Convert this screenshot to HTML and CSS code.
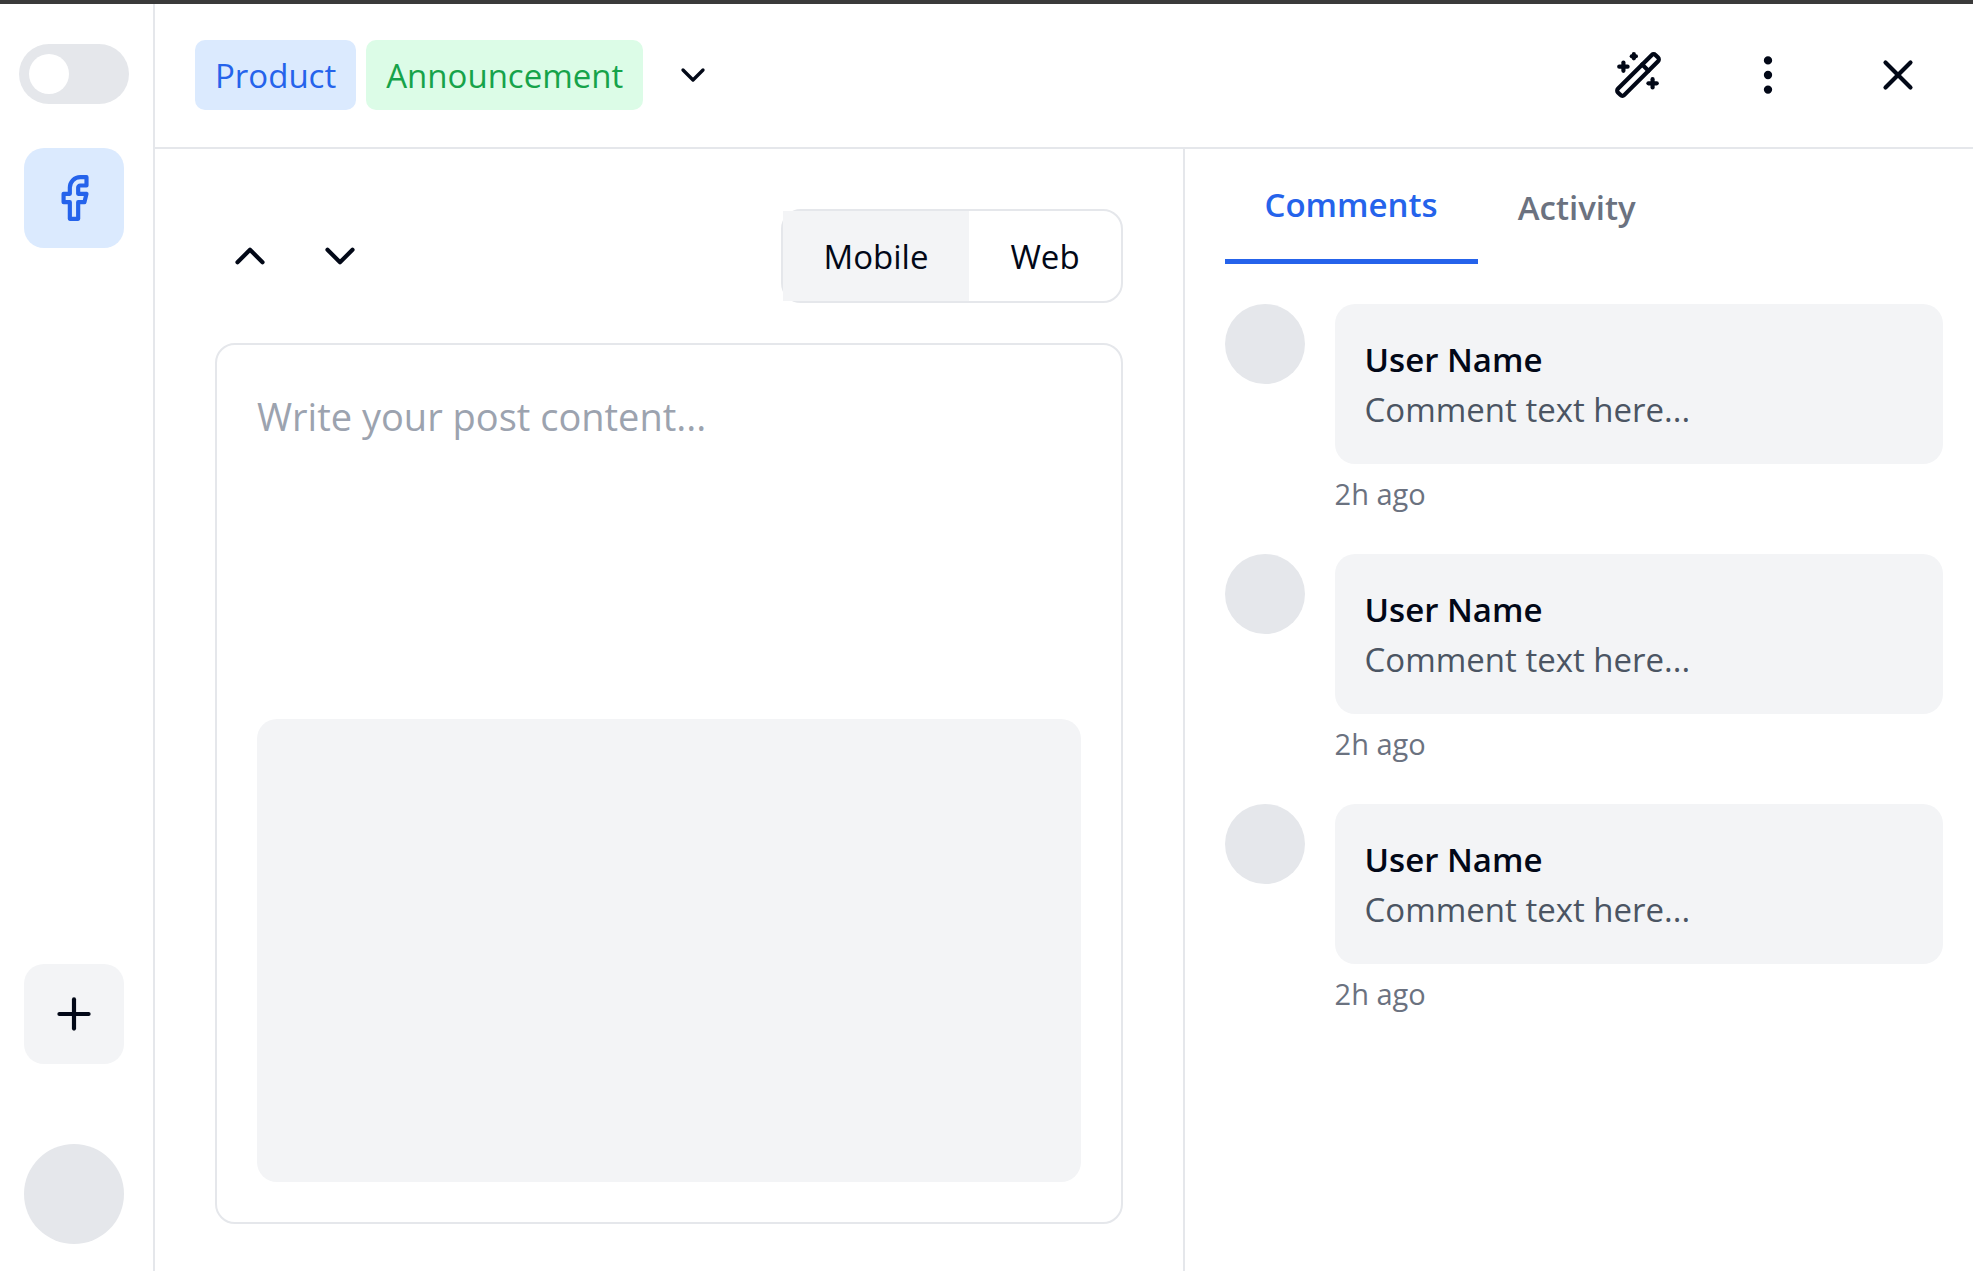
FILE: index.html
```html
<!DOCTYPE html>
<html lang="en">
<head>
  <meta charset="utf-8">
  <meta name="viewport" content="width=device-width, initial-scale=1">
  <title>Post editor</title>
  <link rel="stylesheet" href="styles.css">
</head>
<body>
  <div class="app">
    <aside class="sidebar">
      <input class="switch" type="checkbox" role="switch" aria-label="Enable channel">
      <button class="tile tile-active" type="button" aria-label="Facebook">
        <svg class="icon" viewBox="0 0 24 24"><path d="M18 2h-3a5 5 0 0 0-5 5v3H7v4h3v8h4v-8h3l1-4h-4V7a1 1 0 0 1 1-1h3z"/></svg>
      </button>
      <div class="sidebar-end">
        <button class="tile" type="button" aria-label="Add channel">
          <svg class="icon" viewBox="0 0 24 24"><path d="M5 12h14"/><path d="M12 5v14"/></svg>
        </button>
        <div class="profile"></div>
      </div>
    </aside>

    <div class="workspace">
      <header class="topbar">
        <div class="tags">
          <span class="tag tag-blue">Product</span>
          <span class="tag tag-green">Announcement</span>
          <button class="icon-button tags-more" type="button" aria-label="More tags">
            <svg class="icon icon-small" viewBox="0 0 24 24"><path d="m6 9 6 6 6-6"/></svg>
          </button>
        </div>
        <div class="actions">
          <button class="icon-button action" type="button" aria-label="Assist">
            <svg class="icon" viewBox="0 0 24 24"><path d="m21.64 3.64-1.28-1.28a1.21 1.21 0 0 0-1.72 0L2.36 18.64a1.21 1.21 0 0 0 0 1.72l1.28 1.28a1.2 1.2 0 0 0 1.72 0L21.64 5.36a1.2 1.2 0 0 0 0-1.72"/><path d="m14 7 3 3"/><path d="M5 6v4"/><path d="M19 14v4"/><path d="M10 2v2"/><path d="M7 8H3"/><path d="M21 16h-4"/><path d="M11 3H9"/></svg>
          </button>
          <button class="icon-button action" type="button" aria-label="More options">
            <svg class="icon" viewBox="0 0 24 24"><circle cx="12" cy="12" r="1"/><circle cx="12" cy="5" r="1"/><circle cx="12" cy="19" r="1"/></svg>
          </button>
          <button class="icon-button action" type="button" aria-label="Close">
            <svg class="icon" viewBox="0 0 24 24"><path d="M18 6 6 18"/><path d="m6 6 12 12"/></svg>
          </button>
        </div>
      </header>

      <div class="columns">
        <main class="editor">
          <div class="toolbar">
            <div class="stepper">
              <button class="icon-button" type="button" aria-label="Previous post">
                <svg class="icon" viewBox="0 0 24 24"><path d="m18 15-6-6-6 6"/></svg>
              </button>
              <button class="icon-button" type="button" aria-label="Next post">
                <svg class="icon" viewBox="0 0 24 24"><path d="m6 9 6 6 6-6"/></svg>
              </button>
            </div>
            <div class="segmented">
              <button class="segment segment-active" type="button" aria-pressed="true">Mobile</button>
              <button class="segment" type="button" aria-pressed="false">Web</button>
            </div>
          </div>
          <section class="post">
            <textarea class="post-text" aria-label="Post content" placeholder="Write your post content..."></textarea>
            <div class="post-media"></div>
          </section>
        </main>

        <section class="panel">
          <div class="tabs" role="tablist">
            <button class="tab tab-active" type="button" role="tab" aria-selected="true">Comments</button>
            <button class="tab" type="button" role="tab" aria-selected="false">Activity</button>
          </div>
          <ul class="comments">
            <li class="comment">
              <div class="avatar"></div>
              <div class="comment-body">
                <div class="bubble">
                  <p class="author">User Name</p>
                  <p class="message">Comment text here...</p>
                </div>
                <p class="time">2h ago</p>
              </div>
            </li>
            <li class="comment">
              <div class="avatar"></div>
              <div class="comment-body">
                <div class="bubble">
                  <p class="author">User Name</p>
                  <p class="message">Comment text here...</p>
                </div>
                <p class="time">2h ago</p>
              </div>
            </li>
            <li class="comment">
              <div class="avatar"></div>
              <div class="comment-body">
                <div class="bubble">
                  <p class="author">User Name</p>
                  <p class="message">Comment text here...</p>
                </div>
                <p class="time">2h ago</p>
              </div>
            </li>
          </ul>
        </section>
      </div>
    </div>
  </div>
</body>
</html>
```
FILE: styles.css
```css
:root {
  --ink: #020817;
  --line: #e5e7eb;
  --fill: #f3f4f6;
  --blue: #2563eb;
  --blue-soft: #dbeafe;
}

*,
*::before {
  box-sizing: border-box;
}

body {
  margin: 0;
  background: #fff;
  color: var(--ink);
  font-family: "Segoe UI", "Open Sans", "Noto Sans", sans-serif;
  font-size: 33px;
  line-height: 50px;
}

button,
textarea {
  margin: 0;
  padding: 0;
  border: 0;
  background: none;
  color: inherit;
  font: inherit;
}

button {
  cursor: pointer;
}

p,
ul {
  margin: 0;
  padding: 0;
  list-style: none;
}

.app {
  display: flex;
  min-height: 100vh;
  border-top: 4px solid #3a3a3a;
}

.icon {
  display: block;
  width: 50px;
  height: 50px;
  fill: none;
  stroke: currentColor;
  stroke-width: 2;
  stroke-linecap: round;
  stroke-linejoin: round;
}

.icon-small {
  width: 40px;
  height: 40px;
}

.icon-button {
  padding: 10px;
}

/* Sidebar */

.sidebar {
  display: flex;
  flex: none;
  flex-direction: column;
  align-items: center;
  gap: 44px;
  width: 155px;
  padding: 40px 5px 27px 0;
  border-right: 2px solid var(--line);
}

.switch {
  width: 110px;
  height: 60px;
  margin: 0;
  padding: 10px;
  border-radius: 30px;
  background: var(--line);
  appearance: none;
}

.switch::before {
  content: "";
  display: block;
  width: 40px;
  height: 40px;
  border-radius: 50%;
  background: #fff;
}

.switch:checked::before {
  margin-left: auto;
}

.tile {
  display: grid;
  place-items: center;
  width: 100px;
  height: 100px;
  border-radius: 20px;
  background: var(--fill);
}

.tile-active {
  background: var(--blue-soft);
  color: var(--blue);
}

.sidebar-end {
  display: flex;
  flex-direction: column;
  gap: 80px;
  margin-top: auto;
}

.profile {
  width: 100px;
  height: 100px;
  border-radius: 50%;
  background: var(--line);
}

/* Top bar */

.workspace {
  display: flex;
  flex: 1;
  flex-direction: column;
  min-width: 0;
}

.topbar {
  display: flex;
  align-items: center;
  justify-content: space-between;
  padding: 26px 30px 27px 40px;
  border-bottom: 2px solid var(--line);
}

.tags {
  display: flex;
  align-items: center;
  gap: 10px;
}

.tag {
  padding: 11px 20px 9px;
  border-radius: 10px;
}

.tag-blue {
  background: var(--blue-soft);
  color: var(--blue);
}

.tag-green {
  background: #dcfce7;
  color: #16a34a;
}

.tags-more {
  margin-left: 10px;
}

.actions {
  display: flex;
  gap: 40px;
}

.action {
  padding: 20px;
}

/* Editor */

.columns {
  display: grid;
  flex: 1;
  grid-template-columns: minmax(0, 13fr) minmax(0, 10fr);
}

.editor {
  display: flex;
  flex-direction: column;
  gap: 40px;
  padding: 60px 60px 47px;
}

.toolbar {
  display: flex;
  align-items: center;
  justify-content: space-between;
}

.stepper {
  display: flex;
  gap: 20px;
}

.segmented {
  display: flex;
  min-width: 342px;
  border: 2px solid var(--line);
  border-radius: 20px;
}

.segment {
  flex: 1 0 auto;
  padding: 21px 40px 19px;
}

.segment-active {
  background: var(--fill);
}

.post {
  display: flex;
  flex: 1;
  flex-direction: column;
  gap: 40px;
  padding: 40px;
  border: 2px solid var(--line);
  border-radius: 20px;
}

.post-text {
  flex: 1;
  width: 100%;
  min-height: 180px;
  font-size: 38px;
  line-height: 62px;
  resize: none;
}

.post-text::placeholder {
  color: #9ca3af;
}

.post-media {
  aspect-ratio: 16 / 9;
  border-radius: 20px;
  background: var(--fill);
}

/* Comments panel */

.panel {
  padding: 0 30px 40px 40px;
  border-left: 2px solid var(--line);
}

.tabs {
  display: flex;
}

.tab {
  padding: 31px 40px 29px;
  color: #6b7280;
  font-weight: 600;
}

.tab-active {
  border-bottom: 5px solid var(--blue);
  color: var(--blue);
}

.comments {
  display: grid;
  gap: 40px;
  padding-top: 40px;
}

.comment {
  display: flex;
  gap: 30px;
}

.avatar {
  flex: none;
  width: 80px;
  height: 80px;
  border-radius: 50%;
  background: var(--line);
}

.comment-body {
  display: grid;
  flex: 1;
  gap: 10px;
}

.bubble {
  padding: 31px 30px 29px;
  border-radius: 20px;
  background: var(--fill);
}

.author {
  font-weight: 600;
}

.message {
  color: #4b5563;
}

.time {
  color: #6b7280;
  font-size: 29px;
  line-height: 40px;
}
```
